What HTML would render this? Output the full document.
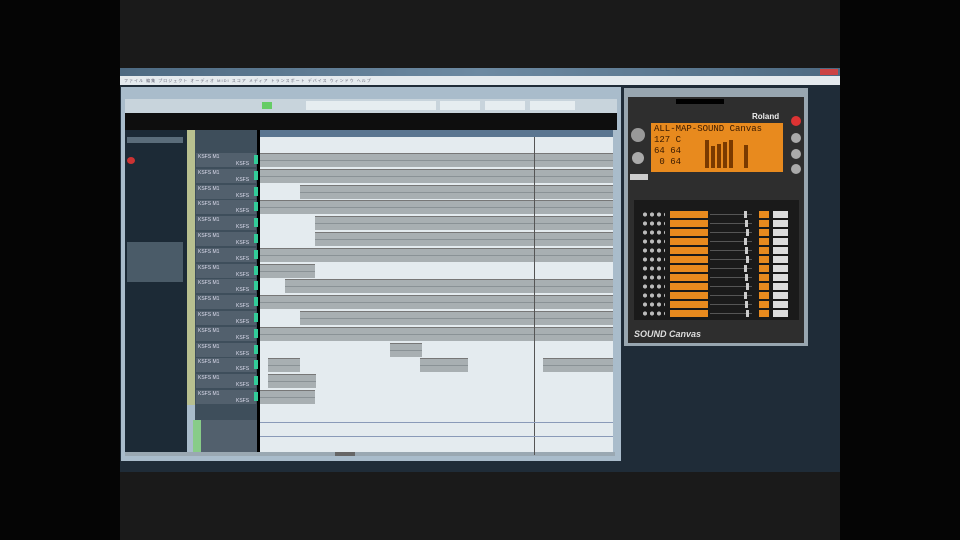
<!DOCTYPE html>
<html><head><meta charset="utf-8"><style>
*{margin:0;padding:0;box-sizing:border-box}
body{width:960px;height:540px;background:#050505;position:relative;overflow:hidden;font-family:"Liberation Sans",sans-serif;font-size:5px}
div{position:absolute}
.g{background:#a8afb2}
.h{background:#52606d}
.o{background:#e88a1e}
</style></head><body>
<div style="left:120px;top:0;width:720px;height:68px;background:#1a1a1a"></div>
<div style="left:120px;top:472px;width:720px;height:68px;background:#1a1a1a"></div>
<div style="left:120px;top:68px;width:720px;height:404px;background:#1f2c38"></div>
<div style="left:120px;top:68px;width:720px;height:8px;background:linear-gradient(90deg,#4d6a82,#6d8aa2,#4d6a82)"></div>
<div style="left:120px;top:76px;width:720px;height:9px;background:#e4eaee;color:#667;font-size:4px;line-height:9px;padding-left:4px;letter-spacing:1px">ファイル 編集 プロジェクト オーディオ MIDI スコア メディア トランスポート デバイス ウィンドウ ヘルプ</div>
<div style="left:820px;top:69px;width:18px;height:6px;background:#c44"></div>
<div style="left:121px;top:87px;width:500px;height:374px;background:#a9bccb"></div>
<div style="left:125px;top:99px;width:492px;height:14px;background:#c8d4dc"></div>
<div style="left:262px;top:102px;width:10px;height:7px;background:#6c6"></div>
<div style="left:306px;top:101px;width:130px;height:9px;background:#e6edf0"></div>
<div style="left:440px;top:101px;width:40px;height:9px;background:#e6edf0"></div>
<div style="left:485px;top:101px;width:40px;height:9px;background:#e6edf0"></div>
<div style="left:530px;top:101px;width:45px;height:9px;background:#e6edf0"></div>
<div style="left:125px;top:113px;width:492px;height:17px;background:#0e0e0e"></div>
<div style="left:125px;top:130px;width:62px;height:325px;background:#1c2a36"></div>
<div style="left:127px;top:137px;width:56px;height:6px;background:#5a6c7a"></div>
<div style="left:127px;top:157px;width:8px;height:7px;background:#c33;border-radius:50%"></div>
<div style="left:127px;top:242px;width:56px;height:40px;background:#4a5b68"></div>
<div style="left:187px;top:130px;width:8px;height:275px;background:#b8c090"></div>
<div style="left:195px;top:130px;width:62px;height:325px;background:#3e4e5b"></div>
<div style="left:257px;top:130px;width:3px;height:325px;background:#000"></div>
<div style="left:260px;top:130px;width:353px;height:7px;background:#5a7590"></div>
<div style="left:260px;top:137px;width:353px;height:318px;background:#e4ebef"></div>
<div style="left:193px;top:420px;width:8px;height:35px;background:#8c8"></div>
<div style="left:201px;top:420px;width:56px;height:35px;background:#52606d"></div>
<div style="left:125px;top:452px;width:490px;height:4px;background:#9aa8b2"></div>
<div style="left:335px;top:452px;width:20px;height:4px;background:#666"></div>
<div id="rows"></div>
<script>
var html='',y=152;
var rows=[
 [[260,353]],[[260,353]],[[300,313]],[[260,353]],[[315,298]],[[315,298]],[[260,353]],[[260,55]],[[285,328]],[[260,353]],[[300,313]],[[260,353]],
 [[390,32]],[[268,32],[420,48],[543,70]],[[268,48]],[[260,55]]];
for(var i=0;i<16;i++){
 html+='<div class="h" style="left:196px;top:'+(y+1)+'px;width:60px;height:14px"></div>';
 html+='<div style="left:198px;top:'+(y+2)+'px;color:#dde;font-size:5px">KSFS M1</div>';
 html+='<div style="left:236px;top:'+(y+9)+'px;color:#dde;font-size:5px">KSFS</div>';
 html+='<div style="left:254px;top:'+(y+3)+'px;width:4px;height:9px;background:#3c9"></div>';
 rows[i].forEach(function(r){html+='<div class="g" style="left:'+r[0]+'px;top:'+(y+1)+'px;width:'+r[1]+'px;height:14px;border-top:1px solid #777"><div style="left:0;top:6px;width:100%;height:1px;background:#8a9296"></div></div>';});
 y+=15.8;
}
html+='<div style="left:534px;top:137px;width:1px;height:318px;background:#555"></div>';
html+='<div style="left:260px;top:422px;width:353px;height:1px;background:#8a9ab8"></div>';
html+='<div style="left:260px;top:436px;width:353px;height:1px;background:#8a9ab8"></div>';
document.getElementById('rows').outerHTML=html;
</script>
<div style="left:624px;top:88px;width:184px;height:258px;background:#98a6b0"></div>
<div style="left:628px;top:97px;width:176px;height:246px;background:#2e2e2e"></div>
<div style="left:676px;top:99px;width:48px;height:5px;background:#000"></div>
<div style="left:752px;top:112px;color:#eee;font-size:8px;font-weight:bold">Roland</div>
<div style="left:791px;top:116px;width:10px;height:10px;border-radius:50%;background:#d33"></div>
<div style="left:791px;top:133px;width:10px;height:10px;border-radius:50%;background:#aaa"></div>
<div style="left:791px;top:149px;width:10px;height:10px;border-radius:50%;background:#aaa"></div>
<div style="left:791px;top:164px;width:10px;height:10px;border-radius:50%;background:#aaa"></div>
<div style="left:631px;top:128px;width:14px;height:14px;border-radius:50%;background:#999"></div>
<div style="left:632px;top:152px;width:12px;height:12px;border-radius:50%;background:#aaa"></div>
<div class="o" style="left:651px;top:123px;width:132px;height:49px;color:#3a1a00;font-family:'Liberation Mono',monospace;font-size:9px;line-height:11px;padding:1px 3px">ALL-MAP-SOUND Canvas<br>127 C<br>64 64<br>&nbsp;0 64</div>
<div style="left:705px;top:140px;width:4px;height:28px;background:#7a3a00"></div>
<div style="left:711px;top:146px;width:4px;height:22px;background:#7a3a00"></div>
<div style="left:717px;top:144px;width:4px;height:24px;background:#7a3a00"></div>
<div style="left:723px;top:142px;width:4px;height:26px;background:#7a3a00"></div>
<div style="left:729px;top:140px;width:4px;height:28px;background:#7a3a00"></div>
<div style="left:744px;top:145px;width:4px;height:23px;background:#7a3a00"></div>
<div style="left:630px;top:174px;width:18px;height:6px;background:#ccc"></div>
<div style="left:634px;top:200px;width:165px;height:120px;background:#1a1a1a"></div>
<div id="sc"></div>
<script>
var s='',y=211;
for(var i=0;i<12;i++){
 s+='<div style="left:643px;top:'+(y+1)+'px;width:22px;height:5px;background:radial-gradient(circle at 2px 2.5px,#bbb 2px,transparent 2.2px) 0 0/7px 5px repeat-x"></div>';
 s+='<div class="o" style="left:670px;top:'+y+'px;width:38px;height:7px"></div>';
 s+='<div style="left:710px;top:'+(y+3)+'px;width:42px;height:1px;background:#555"></div>';
 s+='<div style="left:'+(744+(i%3))+'px;top:'+y+'px;width:3px;height:7px;background:#ccc"></div>';
 s+='<div class="o" style="left:759px;top:'+y+'px;width:10px;height:7px"></div>';
 s+='<div style="left:773px;top:'+y+'px;width:15px;height:7px;background:#ddd"></div>';
 y+=9;
}
document.getElementById('sc').outerHTML=s;
</script>
<div style="left:634px;top:329px;color:#ddd;font-size:9px;font-style:italic;font-weight:bold">SOUND Canvas</div>
</body></html>
